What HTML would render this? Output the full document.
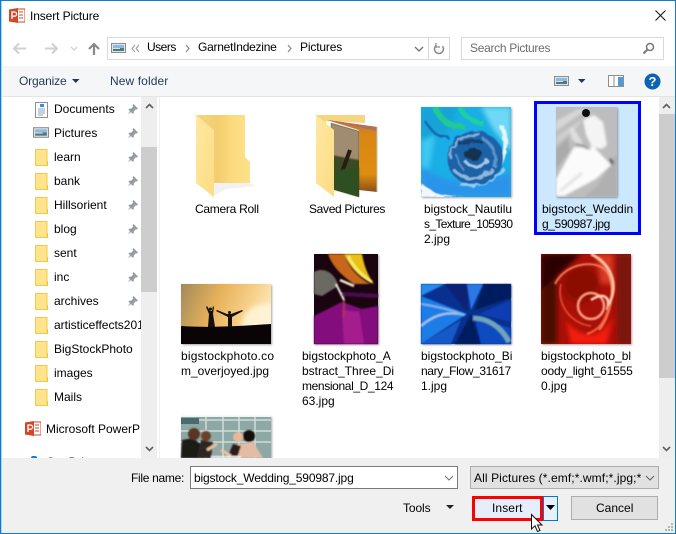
<!DOCTYPE html>
<html><head><meta charset="utf-8"><style>
html,body{margin:0;padding:0;background:#fff}
body{width:676px;height:534px;position:relative;overflow:hidden;font-family:"Liberation Sans",sans-serif;font-size:12px;color:#000}
.a{position:absolute}
.t{position:absolute;white-space:nowrap;line-height:15px}
.t span{display:block}
svg{position:absolute;overflow:visible}
.sh{position:absolute;box-shadow:1px 1px 2px rgba(0,0,0,.35)}
</style></head><body>
<svg width="0" height="0" style="position:absolute">
<defs>
<symbol id="fo" viewBox="0 0 13 17"><path d="M.5.5H12V12.5H13V16.5H.5Z" fill="#ffe48c" stroke="#ecc94e"/><path d="M12 11V16" stroke="#ecc94e"/></symbol>
<symbol id="pin" viewBox="0 0 12 12"><path d="M6.500 1L11 5.500 9.800 6.500 8.800 6.200 6.800 8.500V10.300L5.800 10.800 1.500 6.700 2.300 5.700H4L6.200 3.600 5.600 2.300Z" fill="#959da2"/><path d="M3.200 8L.8 11.300 4.200 9Z" fill="#959da2"/></symbol>
<symbol id="ppt" viewBox="0 0 16 15"><rect x="6" y="1" width="10" height="13" fill="#fff" stroke="#d24726"/><path d="M10 4h4M10 7h4M10 10h4" stroke="#d24726"/><path d="M0 1.500L9 0V15L0 13.500Z" fill="#d24726"/><path d="M3 11V4h2.500a2 2 0 010 4.200H3" fill="none" stroke="#fff" stroke-width="1.300"/></symbol>
<symbol id="pic" viewBox="0 0 15 10"><rect x=".5" y=".5" width="14" height="9" fill="#dfe5ea" stroke="#8b8f93"/><rect x="2" y="2" width="11" height="3" fill="#8dbbe0"/><rect x="2" y="5" width="11" height="3" fill="#4f7a7c"/><rect x="2" y="5" width="7" height="1" fill="#d8e2dc"/></symbol>
<filter id="b1" x="-10%" y="-10%" width="120%" height="120%"><feGaussianBlur stdDeviation=".8"/></filter>
<filter id="b15" x="-10%" y="-10%" width="120%" height="120%"><feGaussianBlur stdDeviation="1.300"/></filter>
<filter id="b2" x="-10%" y="-10%" width="120%" height="120%"><feGaussianBlur stdDeviation="2.500"/></filter>
<filter id="w" x="-10%" y="-10%" width="120%" height="120%"><feTurbulence type="fractalNoise" baseFrequency=".12" numOctaves="2" seed="4"/><feDisplacementMap in="SourceGraphic" scale="6"/><feGaussianBlur stdDeviation=".6"/></filter>
<linearGradient id="ff" x1="0" x2="1" y1="0" y2="0"><stop offset="0" stop-color="#f7d680"/><stop offset=".4" stop-color="#f3cd70"/><stop offset=".65" stop-color="#fcd97c"/><stop offset="1" stop-color="#ffe18a"/></linearGradient>
<linearGradient id="fl" x1="0" x2="1" y1="0" y2="1"><stop offset="0" stop-color="#ffe8a2"/><stop offset="1" stop-color="#fcdc84"/></linearGradient>
<linearGradient id="sun" x1="0" x2="1" y1="0" y2=".3"><stop offset="0" stop-color="#a08a5a"/><stop offset=".45" stop-color="#e8b25c"/><stop offset=".8" stop-color="#f7d28c"/><stop offset="1" stop-color="#fbe6b5"/></linearGradient>
<linearGradient id="or" x1="0" x2="0" y1="0" y2="1"><stop offset="0" stop-color="#b8704a"/><stop offset=".2" stop-color="#d98714"/><stop offset=".75" stop-color="#e08c10"/><stop offset="1" stop-color="#8a5018"/></linearGradient>
<clipPath id="c90"><rect width="90" height="90"/></clipPath>
<clipPath id="c60"><rect width="90" height="60"/></clipPath>
<clipPath id="cw"><rect width="61" height="90"/></clipPath>
</defs></svg>

<!-- Frame -->
<div class="a" style="left:0;top:0;width:676px;height:1px;background:#0f7dcf"></div>
<div class="a" style="left:0;top:0;width:1px;height:534px;background:#0f7dcf"></div>
<div class="a" style="left:1px;top:1px;width:1px;height:532px;background:#a8d2f0"></div>
<div class="a" style="right:0;top:0;width:1px;height:534px;background:#0f7dcf"></div>
<div class="a" style="left:0;top:533px;width:676px;height:1px;background:#0f7dcf"></div>

<!-- Title -->
<svg style="left:9px;top:8px" width="16" height="15"><use href="#ppt" width="16" height="15"/></svg>
<div class="t" style="left:30px;top:9px;letter-spacing:-.11px">Insert Picture</div>
<svg style="left:655px;top:10px" width="11" height="11"><path d="M.5.5L10.500 10.500M10.500.5L.5 10.500" stroke="#111" stroke-width="1"/></svg>

<!-- Nav -->
<svg style="left:13px;top:42px" width="100" height="14">
<path d="M1 6.500H13M6 1.500L1 6.500 6 11.500" fill="none" stroke="#d0d0d0" stroke-width="2"/>
<path d="M32 6.500H44M39 1.500L44 6.500 39 11.500" fill="none" stroke="#d0d0d0" stroke-width="2"/>
<path d="M58 5L61 8 64 5" fill="none" stroke="#d0d0d0" stroke-width="1.300"/>
<path d="M81 13V2M76 7L81 2 86 7" fill="none" stroke="#8a8a8a" stroke-width="2.200"/>
</svg>
<div class="a" style="left:107px;top:37px;width:341px;height:21px;border:1px solid #d9d9d9"></div>
<div class="a" style="left:428px;top:38px;width:1px;height:21px;background:#d9d9d9"></div>
<svg style="left:111px;top:43px" width="15" height="10"><use href="#pic" width="15" height="10"/></svg>
<svg style="left:131px;top:44px" width="10" height="9"><path d="M4 1L1 4.500 4 8M8 1L5 4.500 8 8" fill="none" stroke="#9a9a9a"/></svg>
<div class="t" style="left:147px;top:40px;letter-spacing:-.5px">Users</div>
<svg style="left:185px;top:44px" width="5" height="9"><path d="M1 1L4 4.500 1 8" fill="none" stroke="#8a8a8a" stroke-width="1.200"/></svg>
<div class="t" style="left:198px;top:40px;letter-spacing:-.25px">GarnetIndezine</div>
<svg style="left:287px;top:44px" width="5" height="9"><path d="M1 1L4 4.500 1 8" fill="none" stroke="#8a8a8a" stroke-width="1.200"/></svg>
<div class="t" style="left:300px;top:40px;letter-spacing:-.15px">Pictures</div>
<svg style="left:414px;top:46px" width="10" height="7"><path d="M1 1L5 5 9 1" fill="none" stroke="#707070" stroke-width="1.300"/></svg>
<svg style="left:433px;top:42px" width="13" height="13"><path d="M9.500 4.200A4.500 4.500 0 1 1 3.500 3.200" fill="none" stroke="#8a8a8a" stroke-width="1.500"/><path d="M3 1V5H7" fill="none" stroke="#8a8a8a" stroke-width="1.200"/></svg>
<div class="a" style="left:461px;top:37px;width:201px;height:21px;border:1px solid #d9d9d9"></div>
<div class="t" style="left:470px;top:41px;color:#6d6d6d;letter-spacing:-.3px">Search Pictures</div>
<svg style="left:642px;top:42px" width="13" height="13"><circle cx="8" cy="5" r="3.500" fill="none" stroke="#777" stroke-width="1.500"/><path d="M5.500 7.500L1.500 11.500" stroke="#777" stroke-width="2"/></svg>

<!-- Toolbar -->
<div class="a" style="left:2px;top:66px;width:673px;height:30px;background:#f5f6f7"></div>
<div class="a" style="left:2px;top:96px;width:673px;height:1px;background:#e5e5e5"></div>
<div class="t" style="left:19px;top:74px;color:#1e395b;letter-spacing:-.15px">Organize</div>
<svg style="left:72px;top:79px" width="8" height="5"><path d="M0 0H7.500L3.750 4Z" fill="#1e395b"/></svg>
<div class="t" style="left:110px;top:74px;color:#1e395b;letter-spacing:.1px">New folder</div>
<svg style="left:554px;top:76px" width="15" height="10"><use href="#pic" width="15" height="10"/></svg>
<svg style="left:578px;top:79px" width="8" height="5"><path d="M0 0H7.500L3.750 4Z" fill="#1e395b"/></svg>
<svg style="left:608px;top:75px" width="16" height="12"><rect x=".5" y=".5" width="15" height="11" fill="#fff" stroke="#8f8f8f"/><path d="M6 1V11" stroke="#8f8f8f"/><rect x="10" y="2" width="5" height="9" fill="#4f9ad8"/></svg>
<svg style="left:644px;top:73px" width="17" height="17"><circle cx="8.500" cy="8.500" r="8" fill="#0b63b5"/><text x="8.500" y="13" font-family="Liberation Sans" font-size="13" font-weight="bold" fill="#fff" text-anchor="middle">?</text></svg>

<!-- Sidebar -->
<div class="a" style="left:2px;top:97px;width:139px;height:361px;overflow:hidden;background:#fff">
  <svg style="left:33px;top:5px" width="13" height="16"><rect x=".5" y=".5" width="12" height="15" fill="#fff" stroke="#8f8f8f"/><rect x="5" y="2" width="4" height="3" fill="#3c8fd8"/><path d="M3 7h7M3 9h7M3 11h7M3 13h5" stroke="#8ea0b4"/></svg>
  <svg style="left:31px;top:30px" width="16" height="11"><use href="#pic" width="16" height="11"/></svg>
  <svg style="left:33px;top:52px" width="13" height="17"><use href="#fo" width="13" height="17"/></svg>
  <svg style="left:33px;top:76px" width="13" height="17"><use href="#fo" width="13" height="17"/></svg>
  <svg style="left:33px;top:100px" width="13" height="17"><use href="#fo" width="13" height="17"/></svg>
  <svg style="left:33px;top:124px" width="13" height="17"><use href="#fo" width="13" height="17"/></svg>
  <svg style="left:33px;top:148px" width="13" height="17"><use href="#fo" width="13" height="17"/></svg>
  <svg style="left:33px;top:172px" width="13" height="17"><use href="#fo" width="13" height="17"/></svg>
  <svg style="left:33px;top:196px" width="13" height="17"><use href="#fo" width="13" height="17"/></svg>
  <svg style="left:33px;top:220px" width="13" height="17"><use href="#fo" width="13" height="17"/></svg>
  <svg style="left:33px;top:244px" width="13" height="17"><use href="#fo" width="13" height="17"/></svg>
  <svg style="left:33px;top:268px" width="13" height="17"><use href="#fo" width="13" height="17"/></svg>
  <svg style="left:33px;top:292px" width="13" height="17"><use href="#fo" width="13" height="17"/></svg>
  <svg style="left:125px;top:6px" width="12" height="12"><use href="#pin" width="12" height="12"/></svg>
  <svg style="left:125px;top:30px" width="12" height="12"><use href="#pin" width="12" height="12"/></svg>
  <svg style="left:125px;top:54px" width="12" height="12"><use href="#pin" width="12" height="12"/></svg>
  <svg style="left:125px;top:78px" width="12" height="12"><use href="#pin" width="12" height="12"/></svg>
  <svg style="left:125px;top:102px" width="12" height="12"><use href="#pin" width="12" height="12"/></svg>
  <svg style="left:125px;top:126px" width="12" height="12"><use href="#pin" width="12" height="12"/></svg>
  <svg style="left:125px;top:150px" width="12" height="12"><use href="#pin" width="12" height="12"/></svg>
  <svg style="left:125px;top:174px" width="12" height="12"><use href="#pin" width="12" height="12"/></svg>
  <svg style="left:125px;top:198px" width="12" height="12"><use href="#pin" width="12" height="12"/></svg>
  <div class="t" style="left:52px;top:5px">Documents</div>
  <div class="t" style="left:52px;top:29px">Pictures</div>
  <div class="t" style="left:52px;top:53px">learn</div>
  <div class="t" style="left:52px;top:77px">bank</div>
  <div class="t" style="left:52px;top:101px">Hillsorient</div>
  <div class="t" style="left:52px;top:125px">blog</div>
  <div class="t" style="left:52px;top:149px">sent</div>
  <div class="t" style="left:52px;top:173px">inc</div>
  <div class="t" style="left:52px;top:197px">archives</div>
  <div class="t" style="left:52px;top:221px">artisticeffects2010</div>
  <div class="t" style="left:52px;top:245px">BigStockPhoto</div>
  <div class="t" style="left:52px;top:269px">images</div>
  <div class="t" style="left:52px;top:293px">Mails</div>
  <svg style="left:23px;top:324px" width="16" height="15"><use href="#ppt" width="16" height="15"/></svg>
  <div class="t" style="left:44px;top:325px;width:94px;overflow:hidden">Microsoft PowerPoint</div>
  <div class="a" style="left:29px;top:359px;width:6px;height:4px;background:#1a78d0;border-radius:3px"></div>
  <div class="t" style="left:44px;top:358px">OneDrive</div>
</div>
<div class="a" style="left:141px;top:97px;width:16px;height:361px;background:#eee"></div>
<div class="a" style="left:141px;top:147px;width:16px;height:145px;background:#cdcdcd"></div>
<svg style="left:145px;top:103px" width="9" height="6"><path d="M1 5L4.500 1.500 8 5" fill="none" stroke="#606060" stroke-width="1.600"/></svg>
<svg style="left:145px;top:446px" width="9" height="6"><path d="M1 1L4.500 4.500 8 1" fill="none" stroke="#606060" stroke-width="1.600"/></svg>
<div class="a" style="left:159px;top:97px;width:1px;height:361px;background:#f0f0f0"></div>

<!-- Main scrollbar -->
<div class="a" style="left:659px;top:97px;width:16px;height:361px;background:#eee"></div>
<div class="a" style="left:659px;top:114px;width:16px;height:264px;background:#cdcdcd"></div>
<svg style="left:662px;top:103px" width="9" height="6"><path d="M1 5L4.500 1.500 8 5" fill="none" stroke="#606060" stroke-width="1.600"/></svg>
<svg style="left:662px;top:446px" width="9" height="6"><path d="M1 1L4.500 4.500 8 1" fill="none" stroke="#606060" stroke-width="1.600"/></svg>

<!-- Camera Roll folder -->
<svg style="left:196px;top:115px" width="58" height="82">
<path d="M4 68H54L60 71 30 74 16 82Z" fill="#000" opacity=".05"/>
<path d="M0 0H49V42L54 47V68H4Z" fill="url(#ff)"/>
<path d="M0 0L18 15V82L0 68Z" fill="url(#fl)"/>
</svg>
<div class="t" style="left:195px;top:202px;letter-spacing:-.27px">Camera Roll</div>

<!-- Saved Pictures -->
<svg style="left:316px;top:115px" width="70" height="84">
<path d="M0 0H49V8L10 6V68H0Z" fill="#f6d580"/>
<path d="M11 5L61 12V77L43 75V15Z" fill="url(#or)"/>
<path d="M12 5L61 12V16L43 12Z" fill="#b0705a"/>
<path d="M61 12V77" stroke="#c0c0c0"/>
<path d="M15 8L43 16V82L15 74Z" fill="#3a4a22"/>
<path d="M15 8L43 16V45L15 40Z" fill="#a08c70" filter="url(#b1)"/>
<path d="M25 60L34 35" stroke="#2a1a14" stroke-width="4"/>
<path d="M17 56L43 52V82L17 74Z" fill="#2f4f22" filter="url(#b1)"/>
<path d="M0 0L18 15V82L0 68Z" fill="url(#fl)"/>
</svg>
<div class="t" style="left:309px;top:202px;letter-spacing:-.33px">Saved Pictures</div>

<!-- Nautilus -->
<div class="sh" style="left:421px;top:107px;width:90px;height:90px"></div>
<svg style="left:421px;top:107px" width="90" height="90"><g clip-path="url(#c90)"><rect width="90" height="90" fill="#1aaee6"/>
<g filter="url(#b2)"><path d="M0 0H38L26 26 0 38Z" fill="#12a4d8"/><path d="M60 0H90V45L72 22Z" fill="#6ed8f6"/><path d="M0 58C15 72 35 82 90 66V90H0Z" fill="#2a94ea"/><path d="M0 34L14 28 8 62 0 60Z" fill="#3dc8f2"/></g>
<g filter="url(#w)"><path d="M14 0C20 14 28 20 44 20" stroke="#22c896" stroke-width="6" fill="none"/><path d="M38 0C44 10 50 14 64 18" stroke="#1fd0a0" stroke-width="5" fill="none"/><path d="M4 14C10 24 16 30 28 30" stroke="#1868b8" stroke-width="2.500" fill="none"/><path d="M82 20C86 40 84 52 72 70" stroke="#e6f6fe" stroke-width="4" fill="none"/><path d="M0 76C14 88 28 90 48 90H0Z" fill="#f4f6fd"/><path d="M40 78C56 80 70 76 84 62" stroke="#8ed0f8" stroke-width="3" fill="none"/>
<ellipse cx="54" cy="51" rx="28" ry="27" fill="#1f62a6"/><path d="M28 50C30 36 44 26 60 28" stroke="#7fb0dc" stroke-width="2.500" fill="none"/><path d="M33 63C40 72 60 76 72 62" stroke="#8ab8e2" stroke-width="3" fill="none"/><path d="M62 32C73 38 77 50 73 60" stroke="#5a94cc" stroke-width="3" fill="none"/><path d="M38 38C46 32 54 32 62 36" stroke="#16406e" stroke-width="3" fill="none"/><ellipse cx="52" cy="47" rx="9" ry="6" fill="#123050"/><path d="M44 54C50 62 62 62 66 52" stroke="#a4c8e8" stroke-width="3" fill="none"/><path d="M36 48C36 56 40 60 44 64" stroke="#5a90c4" stroke-width="2" fill="none"/></g></g></svg>
<div class="t" style="left:424px;top:202px"><span>bigstock_Nautilu</span><span style="letter-spacing:-.65px">s_Texture_105930</span><span>2.jpg</span></div>

<!-- Wedding selected -->
<div class="a" style="left:534px;top:101px;width:101px;height:128px;border:3px solid #0000ff;background:#cce8ff"></div>
<div class="sh" style="left:556px;top:107px;width:61px;height:90px"></div>
<svg style="left:556px;top:107px" width="61" height="90"><g clip-path="url(#cw)"><rect width="61" height="90" fill="#bdbdbd"/>
<g filter="url(#b15)"><path d="M0 14L22 2 30 3 0 24Z" fill="#d6d6d6"/><path d="M0 30L26 12 22 20 0 38Z" fill="#cecece"/><path d="M0 42L12 30 14 44 0 62Z" fill="#aaa"/><path d="M61 46L42 78 28 90H61Z" fill="#b0b0b0"/>
<path d="M13 21L17 20 27 36 22 38 16 32Z" fill="#dedede"/>
<path d="M27 13L38 8 47 15 51 38 46 42 36 40 30 28Z" fill="#f4f4f4"/>
<path d="M18 40L38 40 55 58 40 72 8 89 0 89 0 72Z" fill="#fbfbfb"/><path d="M4 84L26 66" stroke="#e2e2e2" stroke-width="3"/><path d="M54 52L57 57" stroke="#555" stroke-width="3"/><path d="M20 37L34 42" stroke="#666" stroke-width="1.500"/></g>
<circle cx="30" cy="6" r="4" fill="#0c0c0c"/></g></svg>
<div class="t" style="left:542px;top:202px"><span>bigstock_Weddin</span><span style="letter-spacing:-.4px">g_590987.jpg</span></div>

<!-- Overjoyed -->
<div class="sh" style="left:181px;top:284px;width:90px;height:60px"></div>
<svg style="left:181px;top:284px" width="90" height="60"><g clip-path="url(#c60)"><rect width="90" height="60" fill="url(#sun)"/><ellipse cx="85" cy="40" rx="24" ry="20" fill="#fff4d8" filter="url(#b2)" opacity=".9"/>
<path d="M0 42C30 44 60 42 90 40V60H0Z" fill="#0b0406"/>
<path d="M27 43L28 30 25 23 26 22 29 27 31 27 32 22 33 23 32 30 34 43Z" fill="#16100c"/><circle cx="29.500" cy="25" r="1.500" fill="#16100c"/>
<path d="M47 43L47 33 35 27 36 26 46 30 50 30 61 26 62 27 51 33 51 43Z" fill="#16100c"/><circle cx="48.500" cy="28.500" r="1.500" fill="#16100c"/></g></svg>
<div class="t" style="left:181px;top:349px"><span style="letter-spacing:.2px">bigstockphoto.co</span><span>m_overjoyed.jpg</span></div>

<!-- Abstract -->
<div class="sh" style="left:314px;top:254px;width:64px;height:90px"></div>
<svg style="left:314px;top:254px" width="64" height="90"><rect width="64" height="90" fill="#1a0410"/>
<g filter="url(#b1)"><path d="M0 62L28 48 48 55 64 52V90H0Z" fill="#84107e"/><path d="M28 56L45 58 50 90H30Z" fill="#a51f8f"/><path d="M14 0H30C34 12 42 22 56 30L40 30C28 22 18 12 14 0Z" fill="#c8661c"/><path d="M30 0H48C50 12 54 22 60 30 46 24 36 14 30 0Z" fill="#e8c018"/><path d="M34 2C40 14 48 22 58 28" stroke="#f8ec6a" stroke-width="3" fill="none"/><path d="M0 18C10 12 22 20 24 32L8 42 0 40Z" fill="#6a6a62"/><path d="M22 30L30 46" stroke="#eee8e0" stroke-width="2"/><path d="M26 26L40 32" stroke="#f8f0d0" stroke-width="2.500"/><path d="M28 40L64 42" stroke="#4a0c50" stroke-width="4"/><path d="M30 46V64" stroke="#a83048" stroke-width="2"/></g></svg>
<div class="t" style="left:302px;top:349px"><span>bigstockphoto_A</span><span>bstract_Three_Di</span><span style="letter-spacing:-.37px">mensional_D_124</span><span>63.jpg</span></div>

<!-- Binary -->
<div class="sh" style="left:421px;top:284px;width:90px;height:60px"></div>
<svg style="left:421px;top:284px" width="90" height="60"><rect width="90" height="60" fill="#08308e"/>
<g filter="url(#b1)"><path d="M0 0H24L0 12Z" fill="#2a8ae8"/><path d="M0 12L46 30 0 60Z" fill="#1a7ce8"/><path d="M0 60L40 36 30 60Z" fill="#1458c8"/><path d="M24 0H48L46 28Z" fill="#082474"/><path d="M46 0H62L50 26Z" fill="#2a78e6"/><path d="M62 0H90V14L54 26Z" fill="#061a60"/><path d="M58 30L90 16V38Z" fill="#0a3cb0"/><path d="M34 60L50 30 60 60Z" fill="#061c60"/><path d="M60 60L54 34 90 44V60Z" fill="#0a4cc0"/><path d="M0 42C16 28 30 28 44 31" stroke="#a8c8e8" stroke-width="2" fill="none"/><path d="M52 34C66 34 80 42 88 58" stroke="#6ea4bc" stroke-width="5" fill="none"/><path d="M0 20C15 22 30 26 44 31" stroke="#80b4e4" stroke-width="2" fill="none"/></g></svg>
<div class="t" style="left:421px;top:349px"><span>bigstockphoto_Bi</span><span style="letter-spacing:-.37px">nary_Flow_31617</span><span>1.jpg</span></div>

<!-- Bloody -->
<div class="sh" style="left:541px;top:254px;width:90px;height:90px"></div>
<svg style="left:541px;top:254px" width="90" height="90"><g clip-path="url(#c90)"><rect width="90" height="90" fill="#a81008"/>
<g filter="url(#b2)"><rect width="16" height="90" fill="#4a0a06"/><path d="M0 0H40L16 22 0 36Z" fill="#2a0604"/><path d="M76 0H90V90H76Z" fill="#7a1208"/><path d="M25 66C40 86 60 86 72 62L66 90H30Z" fill="#f41c10"/><circle cx="40" cy="30" r="18" fill="#8a0c06"/><path d="M55 0H72V30H60Z" fill="#d83a20"/></g>
<g fill="none" filter="url(#b1)"><path d="M14 30C24 10 50 6 62 14 76 24 72 60 58 76" stroke="#f47a58" stroke-width="2"/><path d="M50 0C70 10 78 30 68 50" stroke="#ffc0a0" stroke-width="3"/><circle cx="50" cy="52" r="13" stroke="#f8a080" stroke-width="2.500"/><path d="M50 46C62 38 70 42 66 56" stroke="#ffd0b8" stroke-width="2.500"/><path d="M20 30C15 50 30 70 50 72" stroke="#f05036" stroke-width="1.500"/><path d="M68 52C64 68 58 76 46 80" stroke="#ff6040" stroke-width="2"/></g></g></svg>
<div class="t" style="left:541px;top:349px"><span>bigstockphoto_bl</span><span style="letter-spacing:-.2px">oody_light_61555</span><span>0.jpg</span></div>

<!-- Meeting -->
<div class="sh" style="left:181px;top:416px;width:90px;height:42px"></div>
<svg style="left:181px;top:416px" width="90" height="42"><rect width="90" height="42" fill="#8ea8a6"/>
<path d="M0 4H90M0 15H90M0 26H90M25 0V42M42 0V42M58 0V42M74 0V42" stroke="#cfdcda" stroke-width="1.500"/><rect y="0" width="90" height="1" fill="#eef2f1"/><path d="M0 2H18V8H0Z" fill="#4a6a70"/>
<g filter="url(#b1)"><path d="M0 42L1 24 12 22 22 30 26 42Z" fill="#1e1a18"/><circle cx="13" cy="18" r="6" fill="#5a3420"/><path d="M16 42L20 24 32 26 30 42Z" fill="#2e2624"/><circle cx="25" cy="20" r="5" fill="#6a4028"/><path d="M26 34L36 28" stroke="#ecc0a0" stroke-width="3"/><path d="M54 42L57 28 72 26 82 42Z" fill="#e4bca4"/><circle cx="68" cy="20" r="6" fill="#140e0c"/><path d="M46 42L52 28 60 30 56 42Z" fill="#2a1a14"/><circle cx="57" cy="21" r="5" fill="#e8b898"/><path d="M40 34L50 40" stroke="#ecc0a0" stroke-width="3"/><path d="M30 42H60V40H30Z" fill="#f0f0f0"/></g></svg>

<!-- Bottom panel -->
<div class="a" style="left:2px;top:458px;width:673px;height:75px;background:#f0f0f0"></div>
<div class="t" style="left:131px;top:471px;letter-spacing:-.3px">File name:</div>
<div class="a" style="left:190px;top:466px;width:266px;height:21px;border:1px solid #7a7a7a;background:#fff"></div>
<div class="t" style="left:194px;top:471px;letter-spacing:-.16px">bigstock_Wedding_590987.jpg</div>
<svg style="left:444px;top:475px" width="10" height="6"><path d="M1 1L5 5 9 1" fill="none" stroke="#707070"/></svg>
<div class="a" style="left:470px;top:466px;width:187px;height:21px;border:1px solid #adadad;background:#e1e1e1;overflow:hidden"><div class="t" style="left:3px;top:4px;letter-spacing:.1px">All Pictures (*.emf;*.wmf;*.jpg;*</div></div>
<div class="a" style="left:643px;top:467px;width:14px;height:21px;background:#e1e1e1"></div>
<svg style="left:645px;top:475px" width="10" height="6"><path d="M1 1L5 5 9 1" fill="none" stroke="#606060"/></svg>
<div class="t" style="left:403px;top:501px;letter-spacing:-.1px">Tools</div>
<svg style="left:446px;top:505px" width="9" height="5"><path d="M0 0H8L4 4Z" fill="#222"/></svg>
<div class="a" style="left:543px;top:496px;width:13px;height:23px;border:1px solid #0078d7;background:#e5f1fb"></div>
<svg style="left:546px;top:505px" width="10" height="6"><path d="M0 0H9L4.500 5Z" fill="#000"/></svg>
<div class="a" style="left:472px;top:496px;width:65px;height:19px;border:3px solid #f00;background:#e6eefb"></div>
<div class="t" style="left:492px;top:501px;letter-spacing:.1px">Insert</div>
<div class="a" style="left:571px;top:496px;width:85px;height:22px;border:1px solid #adadad;background:#e1e1e1"></div>
<div class="t" style="left:596px;top:501px">Cancel</div>
<svg style="left:531px;top:514px" width="14" height="20"><path d="M.5.5V15L4 11.800 6.500 17.500 9 16.500 6.500 11H11Z" fill="#fff" stroke="#111" stroke-width="1"/></svg>
<svg style="left:664px;top:522px" width="10" height="10"><path d="M7 1h2v2H7zM4 4h2v2H4zM7 4h2v2H7zM1 7h2v2H1zM4 7h2v2H4zM7 7h2v2H7z" fill="#b5b5b5"/></svg>
</body></html>
